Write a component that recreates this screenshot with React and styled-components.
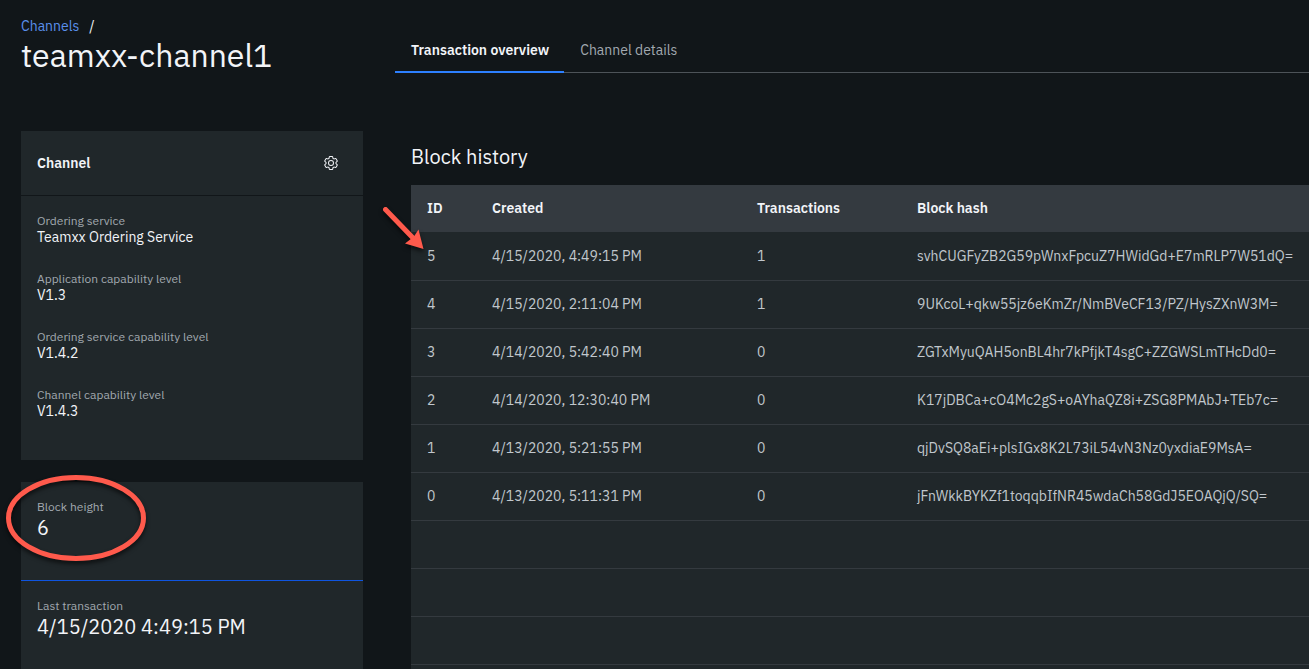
import React from "react";
import styled, { createGlobalStyle } from "styled-components";

const GlobalStyle = createGlobalStyle`
  *, *::before, *::after { box-sizing: border-box; }
  html, body, #root { height: 100%; }
  body {
    margin: 0;
    background: #111619;
    color: #f2f4f8;
    font-family: "IBM Plex Sans", Roboto, "Noto Sans", sans-serif;
    font-size: 14px;
    line-height: 16px;
  }
  h1, h2, h3, p, dl, dd { margin: 0; font-weight: 400; }
`;

const Page = styled.div`
  display: flex;
  gap: 32px;
  height: 100vh;
  padding-left: 21px;
  overflow: hidden;
`;

const Sidebar = styled.aside`
  flex: 0 0 342px;
  display: flex;
  flex-direction: column;
`;

const PageHeading = styled.header`
  height: 131px;
  padding-top: 16px;
  flex: none;
`;

const Breadcrumb = styled.nav`
  display: flex;
  gap: 10px;
  line-height: 20px;
`;

const BreadcrumbLink = styled.a`
  color: #5a8fec;
  text-decoration: none;
`;

const PageTitle = styled.h1`
  font-size: 32px;
  line-height: 38px;
`;

const Card = styled.section`
  position: relative;
  flex: ${(p) => (p.$fill ? "1 0 auto" : "none")};
  margin-bottom: ${(p) => (p.$fill ? 0 : 22)}px;
  background: #20272a;
`;

const CardHeader = styled.div`
  display: flex;
  align-items: center;
  justify-content: space-between;
  height: 65px;
  padding: 0 16px;
  border-bottom: 1px solid #111619;
`;

const CardTitle = styled.h2`
  font-size: 14px;
  font-weight: 600;
`;

const IconButton = styled.button`
  display: flex;
  align-items: center;
  justify-content: center;
  width: 32px;
  height: 32px;
  padding: 0;
  border: 0;
  background: none;
  color: #f2f4f8;
  cursor: pointer;
`;

const Details = styled.dl`
  display: flex;
  flex-direction: column;
  gap: 26px;
  padding: 17px 16px 41px;
`;

const Label = styled.dt`
  color: #a2a9b0;
  font-size: 12px;
  line-height: 16px;
`;

const Value = styled.dd`
  font-size: ${(p) => (p.$large ? 20 : 14)}px;
  line-height: ${(p) => (p.$large ? 26 : 16)}px;
`;

const Stat = styled.dl`
  height: 99px;
  padding: 17px 16px 0;
  border-bottom: ${(p) => (p.$accent ? "1px solid #0f55e0" : "0")};
`;

const Main = styled.main`
  flex: 1;
  min-width: 0;
`;

const TabList = styled.div`
  display: flex;
  height: 73px;
  padding-top: 30px;
  box-shadow: inset 0 -1px #4d5358;
`;

const Tab = styled.button`
  padding: 0 15px 1px 16px;
  border: 0;
  border-bottom: 2px solid ${(p) => (p.$active ? "#2d80ff" : "transparent")};
  background: none;
  color: ${(p) => (p.$active ? "#f2f4f8" : "#a2a9b0")};
  font: inherit;
  font-weight: ${(p) => (p.$active ? 600 : 400)};
  cursor: pointer;
`;

const History = styled.section`
  position: relative;
  padding: 70px 0 0 16px;
`;

const SectionTitle = styled.h2`
  font-size: 20px;
  line-height: 28px;
  margin-bottom: 14px;
`;

const Table = styled.table`
  width: 100%;
  table-layout: fixed;
  border-collapse: separate;
  border-spacing: 0;
  background: #20272a;
`;

const Column = styled.col`
  width: ${(p) => (p.$width ? `${p.$width}px` : "auto")};
`;

const HeadCell = styled.th`
  height: 47px;
  padding: 0 0 2px 16px;
  background: #343a40;
  font-weight: 600;
  text-align: left;
`;

const Cell = styled.td`
  height: 48px;
  padding: 0 0 2px 16px;
  border-top: 1px solid ${(p) => (p.$first ? "transparent" : "#343a3f")};
  color: #c1c7cd;
  white-space: nowrap;
`;

const Ring = styled.svg`
  position: absolute;
  left: -18px;
  top: -10px;
  pointer-events: none;
  filter: drop-shadow(0 3px 2px rgba(0, 0, 0, 0.6));
`;

const Arrow = styled.svg`
  position: absolute;
  left: -16px;
  top: 127px;
  pointer-events: none;
  filter: drop-shadow(0 3px 2px rgba(0, 0, 0, 0.6));
`;

const details = [
  ["Ordering service", "Teamxx Ordering Service"],
  ["Application capability level", "V1.3"],
  ["Ordering service capability level", "V1.4.2"],
  ["Channel capability level", "V1.4.3"],
];

const blocks = [
  ["5", "4/15/2020, 4:49:15 PM", "1", "svhCUGFyZB2G59pWnxFpcuZ7HWidGd+E7mRLP7W51dQ="],
  ["4", "4/15/2020, 2:11:04 PM", "1", "9UKcoL+qkw55jz6eKmZr/NmBVeCF13/PZ/HysZXnW3M="],
  ["3", "4/14/2020, 5:42:40 PM", "0", "ZGTxMyuQAH5onBL4hr7kPfjkT4sgC+ZZGWSLmTHcDd0="],
  ["2", "4/14/2020, 12:30:40 PM", "0", "K17jDBCa+cO4Mc2gS+oAYhaQZ8i+ZSG8PMAbJ+TEb7c="],
  ["1", "4/13/2020, 5:21:55 PM", "0", "qjDvSQ8aEi+plsIGx8K2L73iL54vN3Nz0yxdiaE9MsA="],
  ["0", "4/13/2020, 5:11:31 PM", "0", "jFnWkkBYKZf1toqqbIfNR45wdaCh58GdJ5EOAQjQ/SQ="],
  ["", "", "", ""],
  ["", "", "", ""],
  ["", "", "", ""],
  ["", "", "", ""],
];

function SettingsIcon() {
  return (
    <svg width="16" height="16" viewBox="0 0 32 32" fill="currentColor" aria-hidden="true">
      <path d="M27,16.76c0-.25,0-.5,0-.76s0-.51,0-.77l1.92-1.68A2,2,0,0,0,29.3,11L26.94,7a2,2,0,0,0-1.73-1,2,2,0,0,0-.64.1l-2.43.82a11.35,11.35,0,0,0-1.31-.75l-.51-2.52a2,2,0,0,0-2-1.61H13.64a2,2,0,0,0-2,1.61l-.51,2.52a11.48,11.48,0,0,0-1.32.75L7.43,6.06A2,2,0,0,0,6.79,6,2,2,0,0,0,5.06,7L2.7,11a2,2,0,0,0,.41,2.51L5,15.24c0,.25,0,.5,0,.76s0,.51,0,.77L3.11,18.45A2,2,0,0,0,2.7,21L5.06,25a2,2,0,0,0,1.73,1,2,2,0,0,0,.64-.1l2.43-.82a11.35,11.35,0,0,0,1.31.75l.51,2.52a2,2,0,0,0,2,1.61h4.72a2,2,0,0,0,2-1.61l.51-2.52a11.48,11.48,0,0,0,1.32-.75l2.42.82a2,2,0,0,0,.64.1,2,2,0,0,0,1.73-1L29.3,21a2,2,0,0,0-.41-2.51ZM25.21,24l-3.43-1.16a8.86,8.86,0,0,1-2.71,1.57L18.36,28H13.64l-.71-3.55a9.36,9.36,0,0,1-2.7-1.57L6.79,24,4.43,20l2.72-2.4a8.9,8.9,0,0,1,0-3.13L4.43,12,6.79,8l3.43,1.16a8.86,8.86,0,0,1,2.71-1.57L13.64,4h4.72l.71,3.55a9.36,9.36,0,0,1,2.7,1.57L25.21,8,27.57,12l-2.72,2.4a8.9,8.9,0,0,1,0,3.13L27.57,20Z" />
      <path d="M16,22a6,6,0,1,1,6-6A5.94,5.94,0,0,1,16,22Zm0-10a3.91,3.91,0,0,0-4,4,3.91,3.91,0,0,0,4,4,3.91,3.91,0,0,0,4-4A3.91,3.91,0,0,0,16,12Z" />
    </svg>
  );
}

export default function App() {
  return (
    <>
      <GlobalStyle />
      <Page>
        <Sidebar>
          <PageHeading>
            <Breadcrumb aria-label="Breadcrumb">
              <BreadcrumbLink href="#channels">Channels</BreadcrumbLink>
              <span>/</span>
            </Breadcrumb>
            <PageTitle>teamxx-channel1</PageTitle>
          </PageHeading>
          <Card>
            <CardHeader>
              <CardTitle>Channel</CardTitle>
              <IconButton type="button" aria-label="Channel settings">
                <SettingsIcon />
              </IconButton>
            </CardHeader>
            <Details>
              {details.map(([label, value]) => (
                <div key={label}>
                  <Label>{label}</Label>
                  <Value>{value}</Value>
                </div>
              ))}
            </Details>
          </Card>
          <Card $fill>
            <Stat $accent>
              <Label>Block height</Label>
              <Value $large>6</Value>
            </Stat>
            <Stat>
              <Label>Last transaction</Label>
              <Value $large>4/15/2020 4:49:15 PM</Value>
            </Stat>
            <Ring width="146" height="92" viewBox="0 0 146 92" aria-hidden="true">
              <ellipse cx="73" cy="46" rx="67.5" ry="40.5" fill="none" stroke="#ff5a4c" strokeWidth="5" />
            </Ring>
          </Card>
        </Sidebar>
        <Main>
          <TabList role="tablist">
            <Tab type="button" role="tab" aria-selected="true" $active>
              Transaction overview
            </Tab>
            <Tab type="button" role="tab" aria-selected="false">
              Channel details
            </Tab>
          </TabList>
          <History>
            <SectionTitle>Block history</SectionTitle>
            <Table>
              <colgroup>
                <Column $width={65} />
                <Column $width={265} />
                <Column $width={160} />
                <Column />
              </colgroup>
              <thead>
                <tr>
                  {["ID", "Created", "Transactions", "Block hash"].map((title) => (
                    <HeadCell key={title} scope="col">
                      {title}
                    </HeadCell>
                  ))}
                </tr>
              </thead>
              <tbody>
                {blocks.map((row, r) => (
                  <tr key={r}>
                    {row.map((text, c) => (
                      <Cell key={c} $first={r === 0}>
                        {text}
                      </Cell>
                    ))}
                  </tr>
                ))}
              </tbody>
            </Table>
            <Arrow width="52" height="56" viewBox="0 0 52 56" aria-hidden="true">
              <path d="M6.500 9.500 L34 38" stroke="#ff5a4c" strokeWidth="5" strokeLinecap="round" />
              <path d="M44.500 49 L39.500 29.500 L35 36.500 L26 43.500 Z" fill="#ff5a4c" />
            </Arrow>
          </History>
        </Main>
      </Page>
    </>
  );
}
